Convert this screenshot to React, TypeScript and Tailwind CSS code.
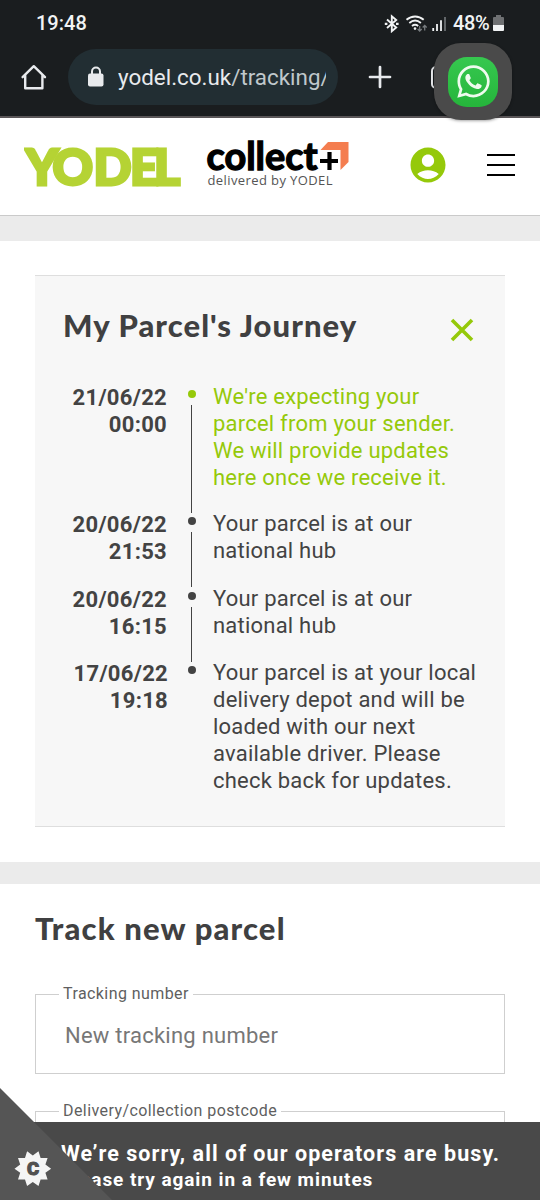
import React from 'react';
import { FaWhatsapp } from 'react-icons/fa';
import { MdAccountCircle } from 'react-icons/md';

interface JourneyEvent {
  date: string;
  time: string;
  lines: string[];
  current?: boolean;
}

const events: JourneyEvent[] = [
  {
    date: '21/06/22',
    time: '00:00',
    lines: ["We're expecting your", 'parcel from your sender.', 'We will provide updates', 'here once we receive it.'],
    current: true,
  },
  { date: '20/06/22', time: '21:53', lines: ['Your parcel is at our', 'national hub'] },
  { date: '20/06/22', time: '16:15', lines: ['Your parcel is at our', 'national hub'] },
  {
    date: '17/06/22',
    time: '19:18',
    lines: [
      'Your parcel is at your local',
      'delivery depot and will be',
      'loaded with our next',
      'available driver. Please',
      'check back for updates.',
    ],
  },
];

// ten-pointed badge used by the cookie control
const badgePoints = Array.from({ length: 20 }, (_, i) => {
  const r = i % 2 === 0 ? 18.3 : 13.2;
  const a = (i * Math.PI) / 10;
  return `${(32.8 + r * Math.cos(a)).toFixed(1)},${(80.7 + r * Math.sin(a)).toFixed(1)}`;
}).join(' ');

const StatusIcons: React.FC = () => (
  <svg width="68" height="20" viewBox="383 12 68 20" fill="none" stroke="#f1f3f4">
    {/* Bluetooth */}
    <path d="M387 18.500l9.200 8-4.400 3.700V15.300l4.400 3.700-9.200 8" strokeWidth="1.900" />
    <path d="M384.800 22.800h2.600M396 22.800h2.600" strokeWidth="2.200" />
    {/* Wifi */}
    <path d="M406.5 18.800c5.200-4.400 12-4.400 17.200 0M409.300 22c3.600-3 8-3 11.600 0M412 25c2-1.500 4.200-1.500 6.200 0" strokeWidth="1.900" />
    <circle cx="415" cy="27.600" r="1.300" fill="#f1f3f4" stroke="none" />
    <path d="M419.700 25v5m-2-2l2 2 2-2M424.700 29.500v-5m-2 2l2-2 2 2" stroke="#777b7e" strokeWidth="1.300" />
    {/* Signal */}
    <path d="M433.200 27v3M437 23v7M441 19.300v10.700" strokeWidth="1.800" />
    <path d="M445 16v14" stroke="#6b6f72" strokeWidth="1.800" />
  </svg>
);

const BrowserBar: React.FC = () => (
  <div className="h-[118px] border-b-2 border-[#5a5658] bg-[#1a1d1f]">
    <div className="flex h-[46px] items-center pl-9 pr-[35px]">
      <span className="text-[20px] font-medium leading-none text-[#f1f3f4]">19:48</span>
      <div className="ml-auto flex items-center">
        <StatusIcons />
        <span className="ml-[2px] w-[38px] whitespace-nowrap text-[20px] font-medium leading-none tracking-[-0.4px] text-[#f1f3f4]">48%</span>
        <svg className="ml-0.5" width="12" height="17" viewBox="0 0 12 17">
          <path d="M3 0h5v2h2q1 0 1 1v7H0V3q0-1 1-1h2z" fill="#6e7072" />
          <path d="M0 10h11v5q0 1-1 1H1q-1 0-1-1z" fill="#f1f3f4" />
        </svg>
      </div>
    </div>
    <div className="flex h-[62px] items-center">
      <svg className="ml-5" width="28" height="28" viewBox="0 0 28 28" fill="none" stroke="#e8eaed" strokeWidth="2.400" strokeLinecap="round" strokeLinejoin="round">
        <path d="M2.600 14.200L13.800 3.200l11.200 11M5.200 12v13.200h17.200V12" />
      </svg>
      <div className="ml-5 flex h-14 w-[270px] items-center rounded-full bg-[#222e33] pl-5">
        <svg width="16" height="22" viewBox="0 0 16 22">
          <path d="M4 9V5.500a4 4 0 0 1 8 0V9" fill="none" stroke="#e8eaed" strokeWidth="2" />
          <rect x="0" y="7.500" width="15.500" height="13" rx="2" fill="#e8eaed" />
        </svg>
        <div className="ml-[14px] w-[208px] overflow-hidden whitespace-nowrap text-[22.4px] leading-8 text-[#e8eaed]">
          yodel.co.uk<span className="text-[#c0c8cc]">/tracking/</span>
        </div>
      </div>
      <svg className="ml-[30px]" width="24" height="24" viewBox="0 0 24 24" stroke="#e8eaed" strokeWidth="2.700" strokeLinecap="round">
        <path d="M12 2v20M2 12h20" />
      </svg>
      <div className="ml-[39px] h-[23px] w-[23px] rounded-[5px] border-[2.5px] border-[#e8eaed]" />
    </div>
  </div>
);

const ChatBubble: React.FC = () => (
  <div className="absolute left-[434px] top-[43px] flex h-[77px] w-[78px] items-center justify-center rounded-[27px] bg-[#4a4a4a] shadow-[0_1px_3px_rgba(0,0,0,0.35)]">
    <div className="flex h-[50px] w-[50px] items-center justify-center rounded-[19px] bg-gradient-to-b from-[#36c84f] to-[#25b53b]">
      <FaWhatsapp className="h-[37px] w-[37px] text-[#eefbee]" />
    </div>
  </div>
);

const SiteHeader: React.FC = () => (
  <header className="flex h-[97px] items-center bg-white pb-[3px] pl-6">
    <svg width="330" height="80" viewBox="24 125 330 80" role="img">
      <text x="25.500 52.500 93.500 130 154" y="184.500" fill="#b5d334" stroke="#b5d334" strokeWidth="3" fontFamily="Lato, sans-serif" fontWeight="900" fontSize="50">
        YODEL
      </text>
      <path d="M320.500 150l7.500-8h20.500v20l-8 8v-20z" fill="#f47d4f" />
      <text x="206.500" y="170" textLength="111" lengthAdjust="spacingAndGlyphs" fill="#000" stroke="#000" strokeWidth="1.300" fontFamily="Lato, sans-serif" fontWeight="700" fontSize="37.500">
        collect
      </text>
      <path d="M329.500 152v18M320 161h18" stroke="#000" strokeWidth="4.200" />
      <text x="207.500" y="185" textLength="125" fill="#555" fontFamily="'Open Sans', sans-serif" fontSize="13">
        delivered by YODEL
      </text>
    </svg>
    <MdAccountCircle className="ml-[53px] h-[42px] w-[42px] text-[#95c90a]" />
    <div className="ml-[38px] flex w-7 flex-col gap-2">
      <div className="h-[2px] bg-black" />
      <div className="h-[2px] bg-black" />
      <div className="h-[2px] bg-black" />
    </div>
  </header>
);

const JourneyCard: React.FC = () => (
  <section className="mx-[35px] mt-[34px] h-[552px] border-y border-[#dedede] bg-[#f7f7f7] px-7">
    <div className="flex items-start justify-between pt-[29px]">
      <h2 className="font-['Lato'] text-[31px] font-black leading-10 tracking-[1.05px] text-[#404041]">My Parcel's Journey</h2>
      <svg className="mr-[3px] mt-[13px]" width="24" height="24" viewBox="0 0 24 24" stroke="#95c90a" strokeWidth="3.600">
        <path d="M2 2l20 20M22 2L2 22" />
      </svg>
    </div>
    <ul className="mt-[38px]">
      {events.map((event, i) => (
        <li key={i} className="group flex pb-[19.6px] text-[22px] leading-[27px] text-[#434343] first:pb-[19px]">
          <div className="w-[105px] pr-[1px] pt-px text-right font-bold tracking-[0.3px] group-last:pr-0">
            {event.date}
            <br />
            {event.time}
          </div>
          <div className="relative ml-[20px] w-2">
            <div className={event.current ? 'mt-[7px] h-2 w-2 rounded-full bg-[#95c90a]' : 'mt-[7px] h-2 w-2 rounded-full bg-[#434343]'} />
            {i < events.length - 1 && <div className="absolute -bottom-[22px] left-[3px] top-[22px] w-px bg-[#434343]" />}
          </div>
          <div className={event.current ? 'ml-[17px] whitespace-nowrap tracking-[0.22px] text-[#95c90a]' : 'ml-[17px] whitespace-nowrap tracking-[0.22px]'}>
            {event.lines.map((line) => (
              <div key={line}>{line}</div>
            ))}
          </div>
        </li>
      ))}
    </ul>
  </section>
);

const TrackForm: React.FC = () => (
  <section className="px-[35px] pt-[24px]">
    <h2 className="font-['Lato'] text-[31px] font-black leading-10 tracking-[1.15px] text-[#404041]">Track new parcel</h2>
    <fieldset className="mt-[36px] h-[90px] border border-[#cfcfcf] px-[23px]">
      <legend className="px-1 text-[16px] leading-5 tracking-[0.42px] text-[#5f5f5f]">Tracking number</legend>
      <div className="pl-[6px] pt-[18px] text-[22px] leading-[27px] tracking-[0.24px] text-[#777]">New tracking number</div>
    </fieldset>
    <fieldset className="mt-[27px] h-[90px] border border-[#cfcfcf] px-[23px]">
      <legend className="px-1 text-[16px] leading-5 tracking-[0.42px] text-[#5f5f5f]">Delivery/collection postcode</legend>
    </fieldset>
  </section>
);

const BusyNotice: React.FC = () => (
  <div className="absolute inset-x-0 bottom-0 h-[78px] whitespace-nowrap bg-[#494949] pl-[61px] pt-[18px] font-bold text-white">
    <div className="text-[21.5px] leading-[27px] tracking-[1.05px]">We’re sorry, all of our operators are busy.</div>
    <div className="text-[19px] leading-[25px] tracking-[0.92px]">Please try again in a few minutes</div>
  </div>
);

const CookieCorner: React.FC = () => (
  <svg className="absolute bottom-0 left-0" width="112" height="112" viewBox="0 0 112 112">
    <path d="M0 0l112 112H0z" fill="#555" />
    <polygon points={badgePoints} fill="#f5f5f5" />
    <text x="33" y="87.300" textAnchor="middle" fill="#505050" stroke="#505050" strokeWidth="1" fontFamily="Roboto, sans-serif" fontWeight="900" fontSize="18.500">
      C
    </text>
  </svg>
);

const App: React.FC = () => {
  return (
    <div className="relative h-[1200px] w-[540px] overflow-hidden bg-white font-['Roboto']">
      <BrowserBar />
      <SiteHeader />
      <div className="h-[26px] border-t border-[#cacaca] bg-[#ebebeb]" />
      <JourneyCard />
      <div className="mt-[35px] h-[22px] bg-[#ebebeb]" />
      <TrackForm />
      <BusyNotice />
      <CookieCorner />
      <ChatBubble />
    </div>
  );
};

export default App;
